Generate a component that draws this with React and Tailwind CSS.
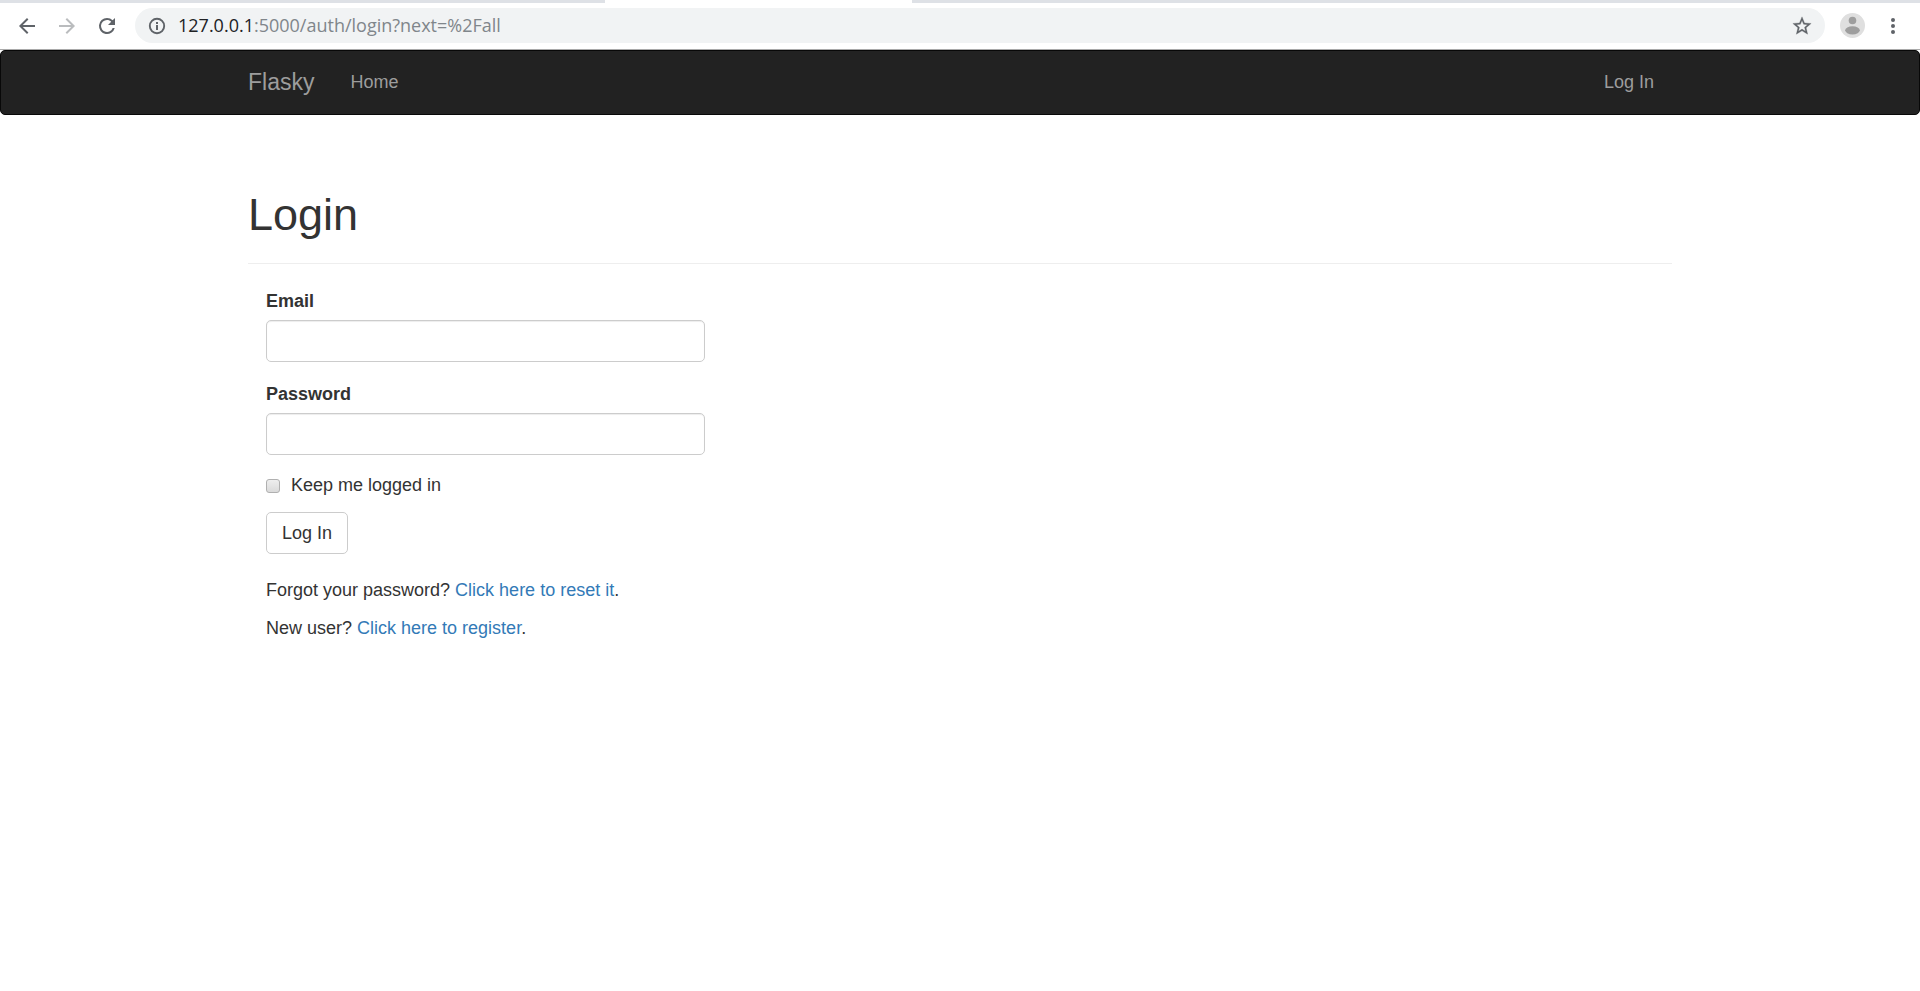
function BackIcon({ className }) {
  return (
    <svg viewBox="0 0 24 24" className={className} fill="currentColor" aria-hidden="true">
      <path d="M20 11H7.83l5.59-5.59L12 4l-8 8 8 8 1.41-1.41L7.83 13H20v-2z" />
    </svg>
  );
}

function ForwardIcon({ className }) {
  return (
    <svg viewBox="0 0 24 24" className={className} fill="currentColor" aria-hidden="true">
      <path d="M12 4l-1.41 1.41L16.17 11H4v2h12.17l-5.58 5.59L12 20l8-8z" />
    </svg>
  );
}

function ReloadIcon({ className }) {
  return (
    <svg viewBox="0 0 24 24" className={className} fill="currentColor" aria-hidden="true">
      <path d="M17.65 6.35A7.96 7.96 0 0 0 12 4a8 8 0 1 0 7.73 10h-2.08A6 6 0 1 1 12 6c1.66 0 3.14.69 4.22 1.78L13 11h7V4l-2.35 2.35z" />
    </svg>
  );
}

function InfoIcon({ className }) {
  return (
    <svg viewBox="0 0 20 20" className={className} fill="currentColor" aria-hidden="true">
      <circle cx="10" cy="10" r="7.2" fill="none" stroke="currentColor" strokeWidth="1.9" />
      <path d="M9 9h2v5H9zM9 6h2v2H9z" />
    </svg>
  );
}

function StarIcon({ className }) {
  return (
    <svg viewBox="0 0 24 24" className={className} fill="currentColor" stroke="currentColor" strokeWidth="0.3" aria-hidden="true">
      <path d="M22 9.24l-7.19-.62L12 2 9.19 8.63 2 9.24l5.46 4.73L5.82 21 12 17.27 18.18 21l-1.63-7.03L22 9.24zM12 15.4l-3.76 2.27 1-4.28-3.32-2.88 4.38-.38L12 6.1l1.71 4.04 4.38.38-3.32 2.88 1 4.28L12 15.4z" />
    </svg>
  );
}

function AvatarIcon({ className }) {
  return (
    <svg viewBox="0 0 25 25" className={className} aria-hidden="true">
      <circle cx="12.5" cy="12.5" r="12.5" fill="#dfdfdf" />
      <circle cx="12.5" cy="7.5" r="3.8" fill="#9e9e9e" />
      <ellipse cx="12.5" cy="17.3" rx="7.3" ry="4.1" fill="#9e9e9e" />
    </svg>
  );
}

function MenuIcon({ className }) {
  return (
    <svg viewBox="0 0 24 24" className={className} fill="currentColor" aria-hidden="true">
      <circle cx="12" cy="6" r="2" />
      <circle cx="12" cy="12" r="2" />
      <circle cx="12" cy="18" r="2" />
    </svg>
  );
}

function BrowserBar() {
  return (
    <header className="border-b border-[#a9a9a9] bg-white text-[#5f6368]">
      <div className="flex h-[3px] bg-[#dee1e6]">
        <div className="ml-[31.5%] w-[16%] bg-white" />
      </div>
      <div className="flex items-center px-[15px] pt-[5px] pb-[6px]">
        <button type="button" aria-label="Back" className="mr-4">
          <BackIcon className="size-6" />
        </button>
        <button type="button" aria-label="Forward" className="mr-4 text-[#babcbe]">
          <ForwardIcon className="size-6" />
        </button>
        <button type="button" aria-label="Reload" className="mr-4">
          <ReloadIcon className="size-6" />
        </button>
        <div className="flex h-[35px] flex-1 items-center rounded-full bg-[#f1f3f4] pr-3 pl-3">
          <InfoIcon className="mr-[11px] size-5" />
          <p className="flex-1 pb-[2px] font-['Open_Sans',sans-serif] text-[18px] leading-6 text-[#80868b]">
            <span className="text-[#202124]">127.0.0.1</span>:5000/auth/login?next=%2Fall
          </p>
          <button type="button" aria-label="Bookmark this page">
            <StarIcon className="size-[22px]" />
          </button>
        </div>
        <button type="button" aria-label="Profile" className="ml-[15px]">
          <AvatarIcon className="size-[25px]" />
        </button>
        <button type="button" aria-label="Menu" className="ml-4">
          <MenuIcon className="size-6" />
        </button>
      </div>
    </header>
  );
}

function Navbar() {
  return (
    <nav className="rounded-[5px] border border-[#080808] bg-[#222222] text-[#9d9d9d]">
      <div className="mx-auto flex h-[63px] max-w-[1424px] items-center">
        <a href="#" className="pr-[18px] text-[23px] leading-[25px]">
          Flasky
        </a>
        <a href="#" className="px-[18px] text-[18px] leading-[25px]">
          Home
        </a>
        <a href="#" className="ml-auto px-[18px] text-[18px] leading-[25px]">
          Log In
        </a>
      </div>
    </nav>
  );
}

function Field({ id, label, type }) {
  return (
    <div>
      <label htmlFor={id} className="mb-[6px] block font-bold">
        {label}
      </label>
      <input
        id={id}
        name={id}
        type={type}
        className="block h-[42px] w-full rounded-[5px] border border-[#cccccc] bg-white px-[15px] shadow-[inset_0_1px_1px_rgba(0,0,0,0.075)]"
      />
    </div>
  );
}

export default function App() {
  return (
    <div className="min-h-screen bg-white font-['Liberation_Sans',Arial,sans-serif] text-[18px] leading-[25px] text-[#333333]">
      <BrowserBar />
      <Navbar />
      <main className="mx-auto max-w-[1424px] pt-[75px]">
        <div className="mb-[25px] border-b border-[#eeeeee] pb-[23px]">
          <h1 className="text-[45px] leading-[50px]">Login</h1>
        </div>
        <div className="w-1/3 px-[18px]">
          <form>
            <div className="flex flex-col gap-5">
              <Field id="email" label="Email" type="text" />
              <Field id="password" label="Password" type="password" />
            </div>
            <label className="mt-[18px] mb-[14px] flex items-center">
              <input
                type="checkbox"
                name="remember_me"
                className="mr-[11px] size-[14px] appearance-none rounded-[3px] border border-[#b0b0b0] bg-linear-to-b from-[#eeeeee] to-[#dadada]"
              />
              Keep me logged in
            </label>
            <button
              type="button"
              className="block h-[42px] rounded-[5px] border border-[#cccccc] bg-white px-[15px]"
            >
              Log In
            </button>
          </form>
          <p className="mt-6">
            Forgot your password?{" "}
            <a href="#" className="text-[#337ab7]">
              Click here to reset it
            </a>
            .
          </p>
          <p className="mt-[13px]">
            New user?{" "}
            <a href="#" className="text-[#337ab7]">
              Click here to register
            </a>
            .
          </p>
        </div>
      </main>
    </div>
  );
}
